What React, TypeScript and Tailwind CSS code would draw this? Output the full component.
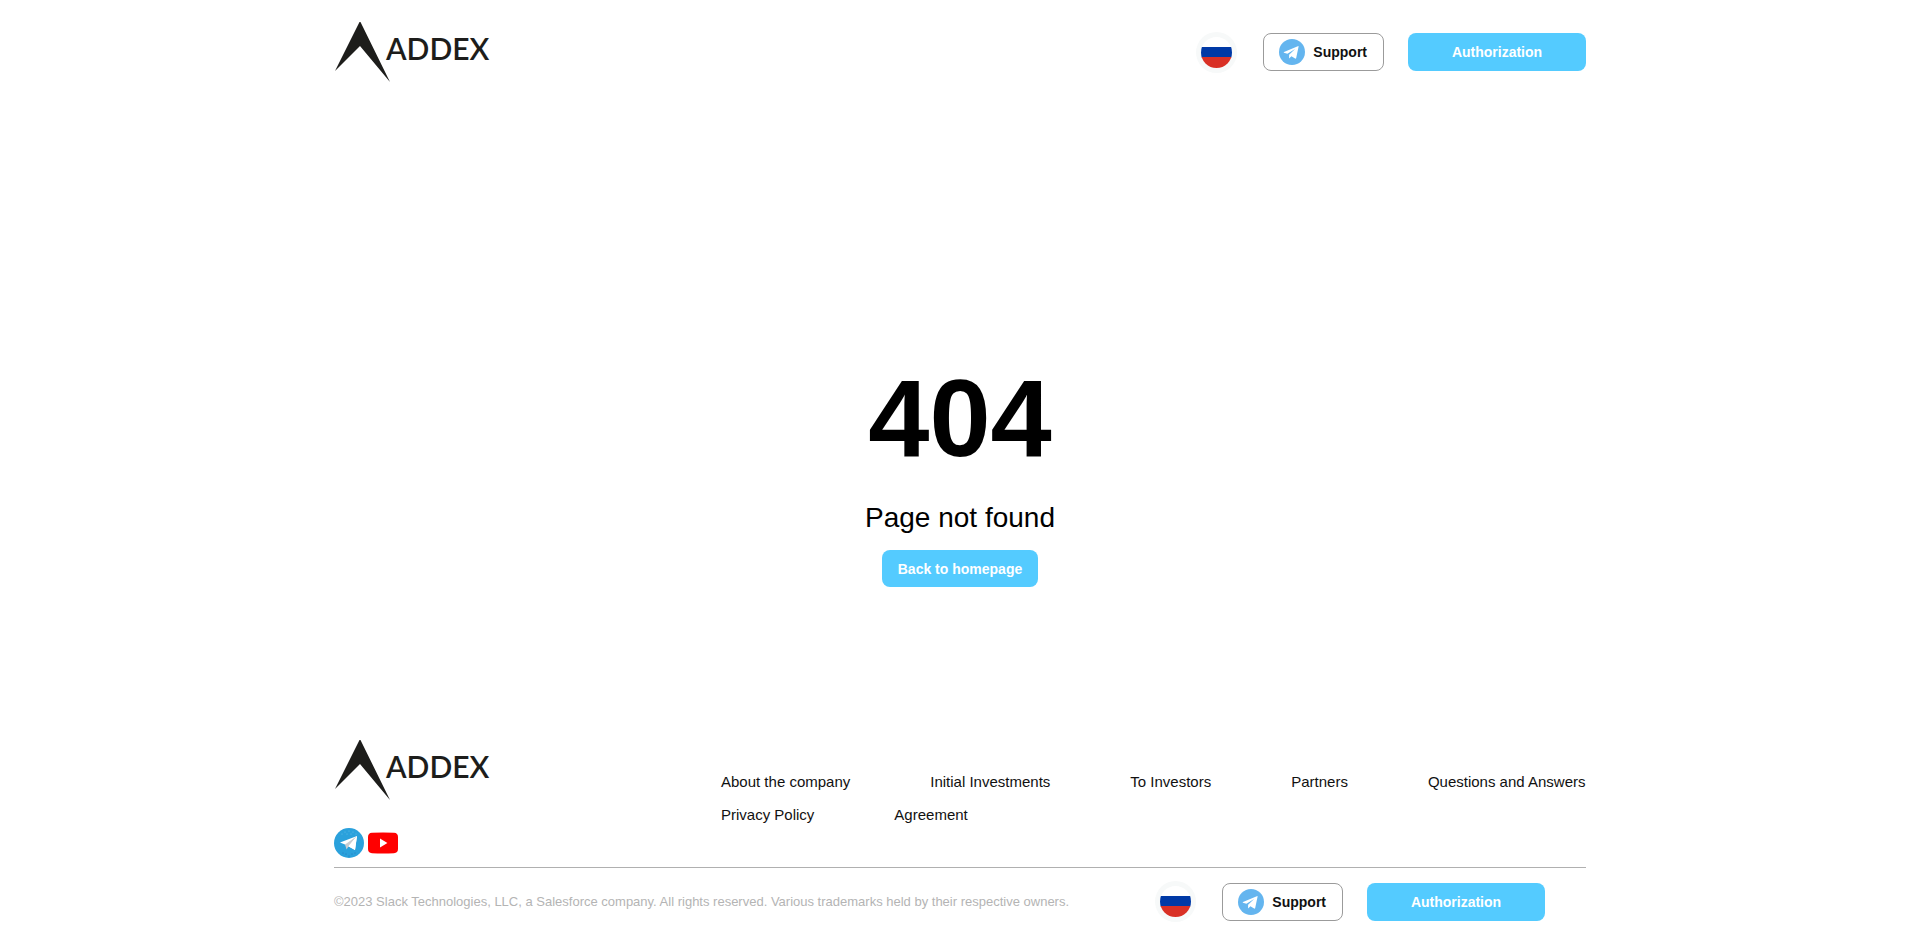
import { useState } from 'react';
import type { ReactNode } from 'react';

const FOOTER_LINKS = [
  { label: 'About the company', href: '/about' },
  { label: 'Initial Investments', href: '/investments' },
  { label: 'To Investors', href: '/investors' },
  { label: 'Partners', href: '/partners' },
  { label: 'Questions and Answers', href: '/faq' },
  { label: 'Privacy Policy', href: '/privacy' },
  { label: 'Agreement', href: '/agreement' },
];

function Logo() {
  return (
    <a href="/" className="flex items-start text-[#1d1d1b]">
      <svg width="56" height="60" viewBox="0 0 56 60" fill="currentColor" aria-hidden="true">
        <path d="M26 -1 L56 60 L26 24 L1 49 Z" />
      </svg>
      <span className="-ml-1 mt-2.5 font-[Lato,sans-serif] text-[30px] leading-8 font-semibold">ADDEX</span>
    </a>
  );
}

function TelegramIcon() {
  return (
    <svg width="26" height="26" viewBox="0 0 26 26" aria-hidden="true">
      <circle cx="13" cy="13" r="13" fill="#64b5ef" />
      <path d="M19.4 7 L5 12.9 c-.5.2-.4.6 0 .8 l3.4 1.1 7.7-4.9 -6 5.8 v3.7 l2.3-2.2 3.7 2.4 c.5.3 1 .1 1.1-.5 L19.6 7.4 z" fill="#fff" />
    </svg>
  );
}

function TelegramSocialIcon() {
  return (
    <svg width="30" height="30" viewBox="0 0 30 30" aria-hidden="true">
      <circle cx="15" cy="15" r="15" fill="#2aa1dc" />
      <g fill="#6cc3ec">
        <circle cx="8" cy="6" r=".5" />
        <circle cx="11" cy="4" r=".5" />
        <circle cx="15" cy="3" r=".5" />
        <circle cx="19" cy="4" r=".5" />
        <circle cx="22" cy="6" r=".5" />
        <circle cx="13" cy="6" r=".5" />
        <circle cx="17" cy="6" r=".5" />
      </g>
      <g fill="#2a6fb0">
        <circle cx="9" cy="25" r=".5" />
        <circle cx="12" cy="26" r=".5" />
        <circle cx="15" cy="28" r=".5" />
        <circle cx="18" cy="26" r=".5" />
        <circle cx="21" cy="25" r=".5" />
      </g>
      <path d="M23 8 L6 14.6 L11 16.6 L21 22 Z" fill="#fff" />
      <path d="M23 8 L11 16.6 L12.6 21.4 L14.4 18.4 Z" fill="#c9cdd1" />
      <path d="M23 8 L14.4 18.2 L21 22 Z" fill="#fff" />
    </svg>
  );
}

function YoutubeIcon() {
  return (
    <svg width="30" height="30" viewBox="0 0 30 30" aria-hidden="true">
      <path d="M4 4.8 Q15 4.2 26 4.8 Q30 5 30 9 V21 Q30 25 26 25.2 Q15 25.8 4 25.2 Q0 25 0 21 V9 Q0 5 4 4.8 Z" fill="#f00" />
      <path d="M12 10.6 L19.4 15 L12 19.4 Z" fill="#fff" />
    </svg>
  );
}

function FlagIcon() {
  return (
    <svg width="41" height="41" viewBox="0 0 41 41" aria-hidden="true">
      <circle cx="20.5" cy="20.5" r="20.5" fill="#f7f9f9" />
      <clipPath id="flag">
        <circle cx="20.5" cy="20.5" r="15.5" />
      </clipPath>
      <g clipPath="url(#flag)">
        <rect x="5" y="5" width="31" height="10" fill="#fff" />
        <rect x="5" y="15" width="31" height="11" fill="#0039a6" />
        <rect x="5" y="25" width="31" height="11" fill="#d93025" />
      </g>
    </svg>
  );
}

function PrimaryButton({ className, children }: { className: string; children: ReactNode }) {
  return (
    <button className={`rounded-lg bg-[#54cbff] text-sm font-bold text-white transition-colors hover:bg-[#3cc0f8] ${className}`}>
      {children}
    </button>
  );
}

function Controls() {
  const [lang, setLang] = useState('en');

  return (
    <div className="flex items-center gap-6">
      <button
        className="mr-0.5 shrink-0 rounded-full"
        aria-label="Russian"
        onClick={() => setLang(lang === 'en' ? 'ru' : 'en')}
      >
        <FlagIcon />
      </button>
      <a
        href="/support"
        className="flex h-[38px] items-center gap-2 rounded-lg border border-[#9b9b9b] pr-4 pl-[15px] text-sm font-bold text-[#111111]"
      >
        <TelegramIcon />
        Support
      </a>
      <PrimaryButton className="h-[38px] w-[178px]">Authorization</PrimaryButton>
    </div>
  );
}

export default function App() {
  return (
    <div className="flex min-h-screen flex-col bg-white font-['Liberation_Sans',Arial,sans-serif] text-black">
      <div className="mx-auto flex w-full max-w-[1252px] flex-1 flex-col">
        <header className="flex h-[104px] items-center justify-between">
          <Logo />
          <Controls />
        </header>

        <main className="flex flex-1 flex-col items-center justify-end pb-[153px]">
          <h1 className="text-[110px] leading-none font-bold">404</h1>
          <p className="mt-[29px] text-[28px] leading-8">Page not found</p>
          <PrimaryButton className="mt-4 h-[37px] px-4">Back to homepage</PrimaryButton>
        </main>

        <footer>
          <div className="flex items-start justify-between">
            <div>
              <Logo />
              <div className="mt-7 flex gap-1">
                <a href="https://t.me/addex" aria-label="Telegram">
                  <TelegramSocialIcon />
                </a>
                <a href="https://youtube.com/addex" aria-label="YouTube">
                  <YoutubeIcon />
                </a>
              </div>
            </div>
            <nav className="mt-[31px] flex w-[865px] flex-wrap gap-x-20 gap-y-3">
              {FOOTER_LINKS.map((link) => (
                <a key={link.href} href={link.href} className="text-[15px] leading-[21px] text-[#111111]">
                  {link.label}
                </a>
              ))}
            </nav>
          </div>
          <div className="mt-[9px] flex items-center justify-between border-t border-[#b0b0b0] pt-[13px] pr-[41px] pb-[3px]">
            <p className="text-[13px] text-[#b4b4b4]">
              ©2023 Slack Technologies, LLC, a Salesforce company. All rights reserved. Various trademarks held by their respective owners.
            </p>
            <Controls />
          </div>
        </footer>
      </div>
    </div>
  );
}
